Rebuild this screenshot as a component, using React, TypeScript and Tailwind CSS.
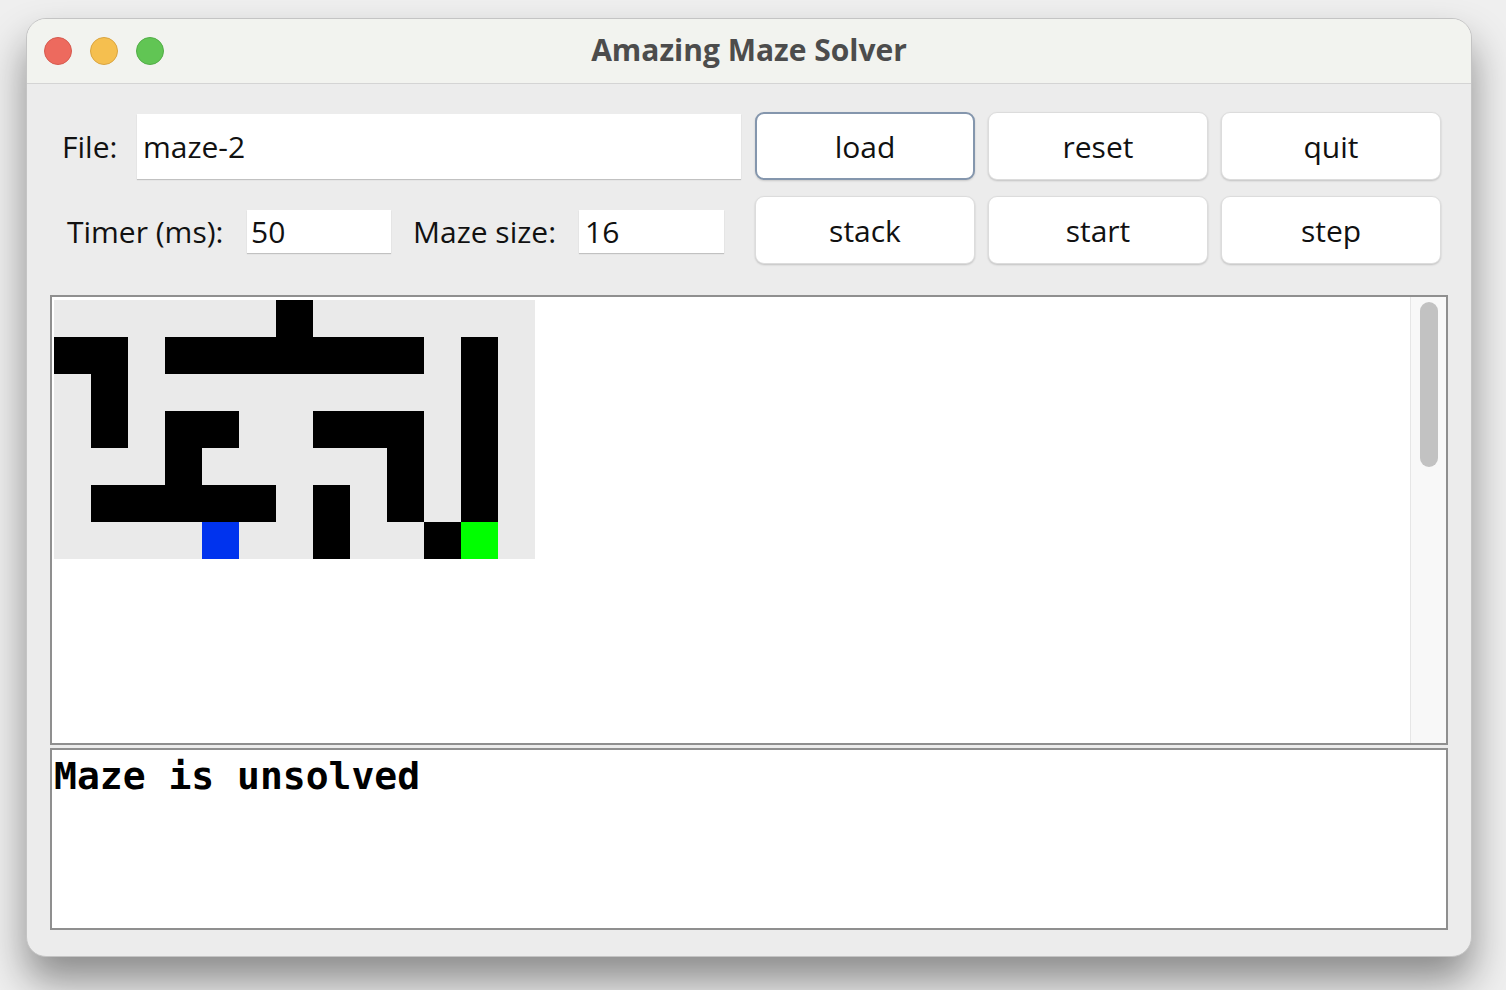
import React from "react";

// 13 x 7 maze, 0 = open, 1 = wall, 2 = start, 3 = goal
const MAZE: number[][] = [
  [0, 0, 0, 0, 0, 0, 1, 0, 0, 0, 0, 0, 0],
  [1, 1, 0, 1, 1, 1, 1, 1, 1, 1, 0, 1, 0],
  [0, 1, 0, 0, 0, 0, 0, 0, 0, 0, 0, 1, 0],
  [0, 1, 0, 1, 1, 0, 0, 1, 1, 1, 0, 1, 0],
  [0, 0, 0, 1, 0, 0, 0, 0, 0, 1, 0, 1, 0],
  [0, 1, 1, 1, 1, 1, 0, 1, 0, 1, 0, 1, 0],
  [0, 0, 0, 0, 2, 0, 0, 1, 0, 0, 1, 3, 0],
];

const CELL: Record<number, string> = {
  0: "bg-[#eaeaea]",
  1: "bg-black",
  2: "bg-[#0033ee]",
  3: "bg-[#00ff00]",
};

function Button({ label, focused }: { label: string; focused?: boolean }) {
  return (
    <button
      className={
        "h-[68px] w-[220px] rounded-[9px] bg-white text-[30px] text-[#111] " +
        (focused
          ? "border-2 border-[#8496ad] shadow-[0_1px_2px_rgba(0,0,0,0.15)]"
          : "border border-[#dcdcdc] shadow-[0_1px_2px_rgba(0,0,0,0.18)]")
      }
    >
      {label}
    </button>
  );
}

function Field({ value, className }: { value: string; className: string }) {
  return (
    <div
      className={
        "flex shrink-0 items-center bg-white text-[30px] text-[#111] shadow-[0_1px_1px_rgba(0,0,0,0.18)] " +
        className
      }
    >
      {value}
    </div>
  );
}

export default function App() {
  return (
    <div className="h-[990px] w-[1506px] bg-[#efefef] pl-[26px] pt-[18px] font-['Open_Sans',sans-serif]">
      <div className="flex h-[939px] w-[1446px] flex-col overflow-hidden rounded-[20px] border border-[#c4c4c4] bg-[#ececec] shadow-[0_24px_40px_rgba(0,0,0,0.42)]">
        {/* title bar */}
        <div className="relative flex h-[65px] shrink-0 items-center justify-center border-b border-[#d4d4d4] bg-[#f2f3ef]">
          <div className="absolute left-[17px] top-[18px] flex gap-[18px]">
            <span className="h-[28px] w-[28px] rounded-full border border-[#d65a4f] bg-[#ed6a5e]" />
            <span className="h-[28px] w-[28px] rounded-full border border-[#d9a440] bg-[#f5bf4f]" />
            <span className="h-[28px] w-[28px] rounded-full border border-[#52ad47] bg-[#61c554]" />
          </div>
          <span className="-mt-[3px] text-[30px] font-bold text-[#4c4c4c]">Amazing Maze Solver</span>
        </div>

        {/* body */}
        <div className="flex flex-1 flex-col px-[23px] pt-[28px]">
          <div className="flex">
            <div className="flex w-[690px] shrink-0 flex-col gap-[16px]">
              <div className="flex h-[68px] items-center">
                <span className="w-[87px] shrink-0 pl-[12px] text-[30px] text-[#111]">File:</span>
                <Field value="maze-2" className="h-[65px] w-[604px] pl-[6px]" />
              </div>
              <div className="flex h-[68px] items-center pt-[2px]">
                <span className="w-[197px] shrink-0 pl-[17px] text-[30px] text-[#111]">Timer (ms):</span>
                <Field value="50" className="h-[43px] w-[144px] pl-[4px]" />
                <span className="w-[188px] shrink-0 pl-[22px] text-[30px] text-[#111]">Maze size:</span>
                <Field value="16" className="h-[43px] w-[145px] pl-[6px]" />
              </div>
            </div>
            <div className="ml-[15px] grid shrink-0 grid-cols-[220px_220px_220px] gap-x-[13px] gap-y-[16px]">
              <Button label="load" focused />
              <Button label="reset" />
              <Button label="quit" />
              <Button label="stack" />
              <Button label="start" />
              <Button label="step" />
            </div>
          </div>

          {/* maze panel */}
          <div className="mt-[31px] flex h-[450px] border-2 border-[#8f8f8f] bg-white">
            <div className="flex-1 pl-[2px] pt-[3px]">
              <div className="grid w-[481px] grid-cols-[repeat(13,37px)] grid-rows-[repeat(7,37px)]">
                {MAZE.flat().map((c, i) => (
                  <div key={i} className={CELL[c]} />
                ))}
              </div>
            </div>
            <div className="flex w-[36px] justify-center border-l border-[#e6e6e6] bg-[#f8f8f8] pt-[5px]">
              <div className="h-[165px] w-[18px] rounded-full bg-[#c2c2c2]" />
            </div>
          </div>

          {/* output */}
          <div className="mt-[3px] h-[182px] border-2 border-[#8f8f8f] bg-white pl-[2px] pt-[4px]">
            <div className="font-['DejaVu_Sans_Mono',monospace] text-[38px] font-bold leading-[1.2] text-black">
              Maze is unsolved
            </div>
          </div>
        </div>
      </div>
    </div>
  );
}
